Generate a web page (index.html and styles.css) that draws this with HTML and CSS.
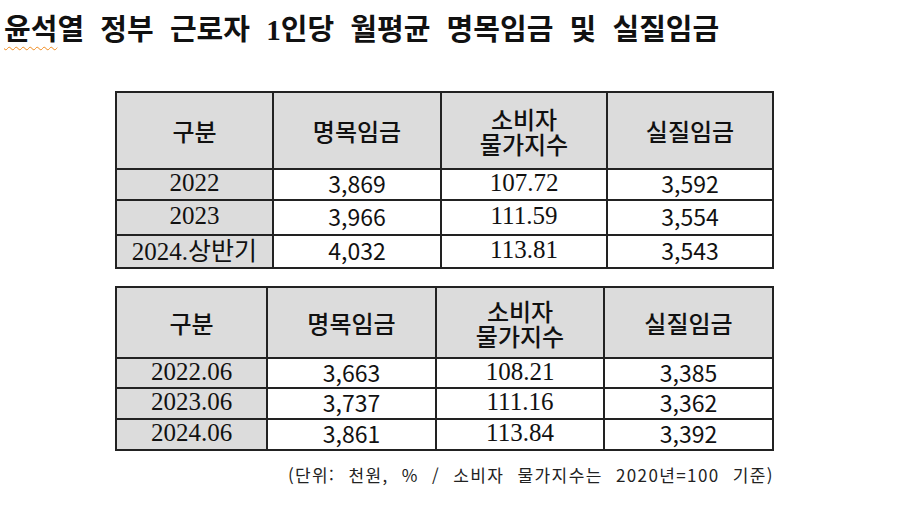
FILE: index.html
```html
<!DOCTYPE html>
<html lang="ko">
<head>
<meta charset="utf-8">
<link rel="stylesheet" href="styles.css">
</head>
<body>
<h1 class="title"><span class="squiggle">윤석</span>열 정부 근로자 1인당 월평균 명목임금 및 실질임금</h1>
<div class="tables">
  <table class="wage t1">
    <colgroup><col class="c1"><col class="c2"><col class="c3"><col class="c4"></colgroup>
    <tr class="head"><th>구분</th><th>명목임금</th><th>소비자<br>물가지수</th><th>실질임금</th></tr>
    <tr class="r1"><th class="year">2022</th><td>3,869</td><td class="idx">107.72</td><td>3,592</td></tr>
    <tr class="r2"><th class="year">2023</th><td>3,966</td><td class="idx">111.59</td><td>3,554</td></tr>
    <tr class="r3"><th class="year">2024.<span class="ko">상반기</span></th><td>4,032</td><td class="idx">113.81</td><td>3,543</td></tr>
  </table>
  <table class="wage t2">
    <colgroup><col class="c1"><col class="c2"><col class="c3"><col class="c4"></colgroup>
    <tr class="head"><th>구분</th><th>명목임금</th><th>소비자<br>물가지수</th><th>실질임금</th></tr>
    <tr class="r1"><th class="year">2022.06</th><td>3,663</td><td class="idx">108.21</td><td>3,385</td></tr>
    <tr class="r2"><th class="year">2023.06</th><td>3,737</td><td class="idx">111.16</td><td>3,362</td></tr>
    <tr class="r3"><th class="year">2024.06</th><td>3,861</td><td class="idx">113.84</td><td>3,392</td></tr>
  </table>
  <p class="note">(단위: 천원, % / 소비자 물가지수는 2020년=100 기준)</p>
</div>
</body>
</html>
```

FILE: styles.css
```css
html, body {
  margin: 0;
  padding: 0;
  background: #ffffff;
}
body {
  width: 906px;
  height: 521px;
  overflow: hidden;
}
.title {
  margin: 0;
  padding: 13px 0 0 4px;
  height: 40px;
  font-family: "Liberation Serif", "Noto Sans CJK KR", serif;
  font-weight: 700;
  font-size: 29px;
  line-height: 34px;
  color: #111;
  word-spacing: 9px;
  white-space: nowrap;
}
.squiggle {
  text-decoration: underline wavy #f08a1c;
  text-decoration-thickness: 1px;
  text-underline-offset: 6px;
}
.tables {
  padding-left: 115px;
  padding-top: 38px;
  display: flex;
  flex-direction: column;
  align-items: flex-start;
}
.wage {
  border-collapse: separate;
  border-spacing: 2px;
  background: #222;
  table-layout: fixed;
  font-family: "Noto Sans CJK KR", sans-serif;
  color: #111;
}
.wage th, .wage td {
  padding: 0 0 3px 0;
  text-align: center;
  vertical-align: middle;
  background: #ffffff;
  font-size: 23px;
  font-weight: 400;
  line-height: 24px;
  white-space: nowrap;
}
.wage .head th {
  padding: 0;
  background: #dcdcdc;
  font-weight: 500;
  font-size: 24px;
  line-height: 25px;
}
.wage th.year {
  background: #dcdcdc;
  font-family: "Liberation Serif", "Noto Sans CJK KR", serif;
  font-size: 25px;
  font-weight: 400;
}
.wage th.year .ko {
  font-family: "Noto Sans CJK KR", sans-serif;
  font-size: 25px;
}
.wage td.idx {
  font-family: "Liberation Serif", "Noto Sans CJK KR", serif;
  font-size: 25px;
}
.t1 .c1 { width: 155px; }
.t1 .c2 { width: 166px; }
.t1 .c3 { width: 164px; }
.t1 .c4 { width: 164px; }
.t1 .head { height: 75px; }
.t1 .r1 { height: 29px; }
.t1 .r2 { height: 33px; }
.t1 .r3 { height: 31px; }
.t2 { margin-top: 17px; }
.t2 .c1 { width: 149px; }
.t2 .c2 { width: 167px; }
.t2 .c3 { width: 166px; }
.t2 .c4 { width: 167px; }
.t2 .head { height: 69px; }
.t2 .r1 { height: 28px; }
.t2 .r2 { height: 29px; }
.t2 .r3 { height: 29px; }
.t2 .year { font-size: 26px; }
.note {
  margin: 14px 0 0 0;
  width: 659px;
  text-align: right;
  font-family: "Noto Sans CJK KR", sans-serif;
  font-size: 17px;
  line-height: 20px;
  color: #222;
  letter-spacing: 1.4px;
  word-spacing: 7px;
}
```
